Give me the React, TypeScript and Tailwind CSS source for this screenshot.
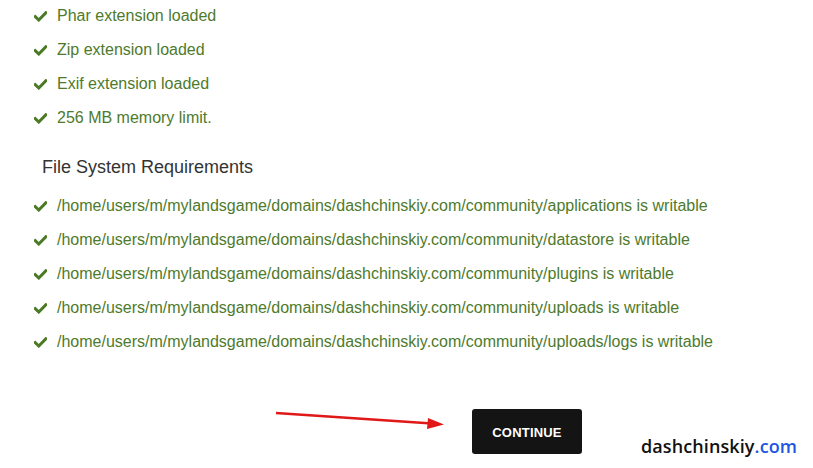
import React from "react";

const ext = ["Phar extension loaded", "Zip extension loaded", "Exif extension loaded", "256 MB memory limit."];
const base = "/home/users/m/mylandsgame/domains/dashchinskiy.com/community/";
const fs = ["applications", "datastore", "plugins", "uploads", "uploads/logs"];

function Check() {
  return (
    <svg className="ml-[34px] mr-[10px]" width="13" height="11" viewBox="0 0 13 11">
      <path d="M1.2 5.6 L4.8 9 L11.8 1.8" fill="none" stroke="#4a7a25" strokeWidth="3" strokeLinecap="square" strokeLinejoin="miter" />
    </svg>
  );
}

function Row({ text }: { text: string }) {
  return (
    <li className="flex items-center h-[34px]">
      <Check />
      <span className="text-[16px] text-[#4e7a2c]">{text}</span>
    </li>
  );
}

export default function App() {
  return (
    <div className="w-[813px] h-[468px] bg-white overflow-hidden" style={{ fontFamily: '"Liberation Sans", Arial, sans-serif' }}>
      <ul className="mt-[-1px]">
        {ext.map((t) => (
          <Row key={t} text={t} />
        ))}
      </ul>
      <h3 className="text-[18px] text-[#333] ml-[42px] mt-[17px] h-[30px] leading-[30px]">File System Requirements</h3>
      <ul className="mt-[7px]">
        {fs.map((t) => (
          <Row key={t} text={`${base}${t} is writable`} />
        ))}
      </ul>
      <div className="relative mt-[51px] w-[813px] h-[60px]">
        <svg className="absolute left-[274px] top-[0px]" width="175" height="20" viewBox="0 0 175 20">
          <line x1="2" y1="3" x2="158" y2="13.5" stroke="#e01818" strokeWidth="2.5" />
          <polygon points="170,14.5 154,8 153,19" fill="#e01818" />
        </svg>
        <button className="absolute left-[472px] top-[-1px] w-[110px] h-[45px] pt-[3px] bg-[#141414] rounded-[3px] text-white text-[13px] font-bold tracking-[0.2px]">
          CONTINUE
        </button>
        <div className="absolute left-[641px] top-[23px] text-[18px] font-semibold tracking-[0.1px]" style={{ fontFamily: '"Open Sans", sans-serif' }}>
          <span className="text-[#111]">dashchinskiy</span>
          <span className="text-[#2255e0]">.com</span>
        </div>
      </div>
    </div>
  );
}
